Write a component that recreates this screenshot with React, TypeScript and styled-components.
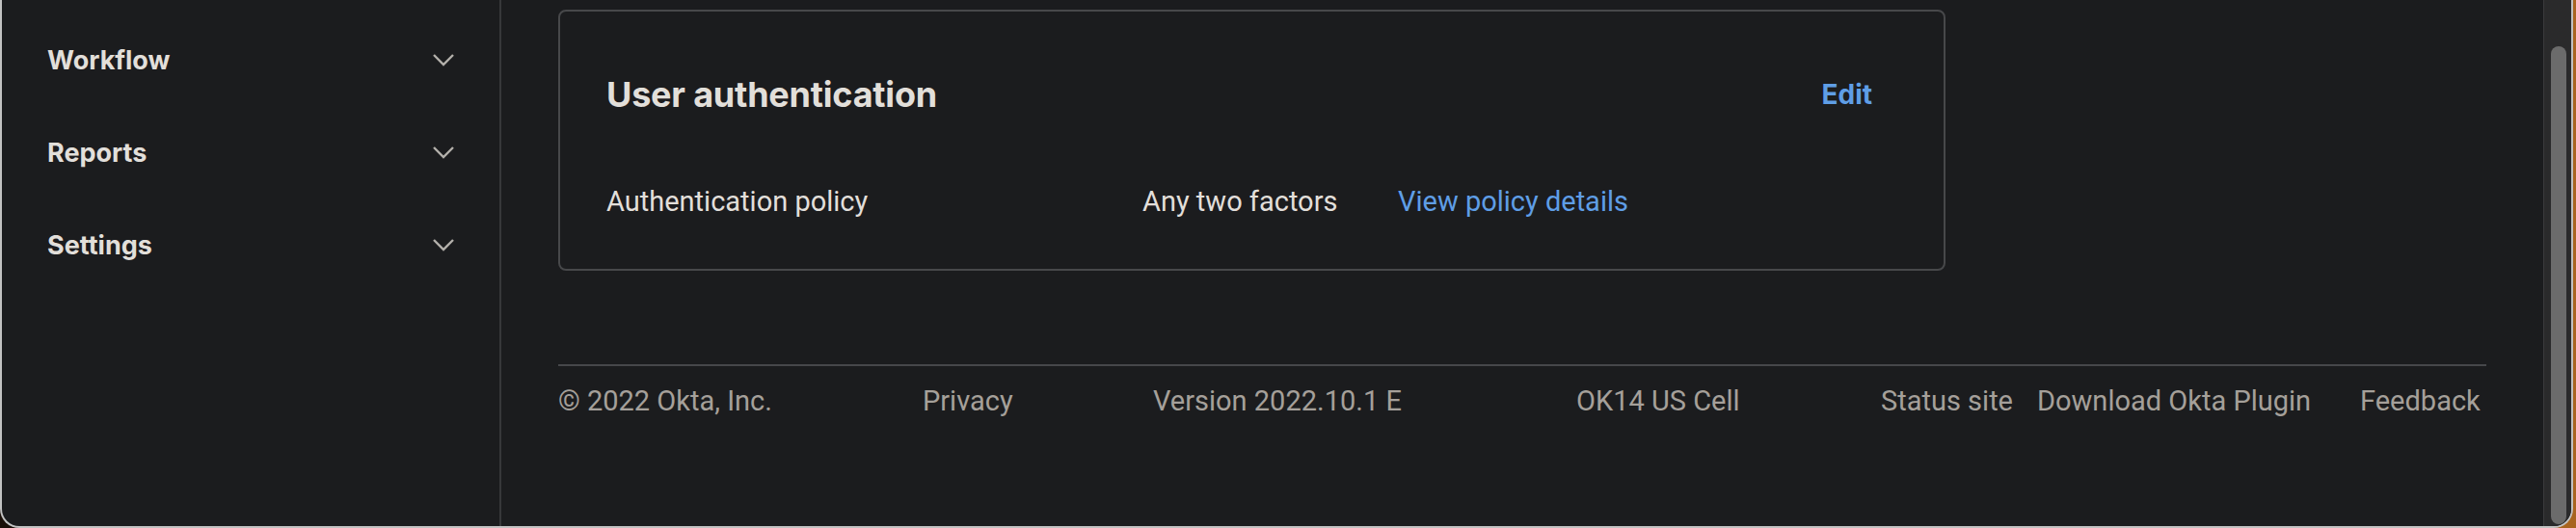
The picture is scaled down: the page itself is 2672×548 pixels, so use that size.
import React from "react";
import styled, { createGlobalStyle } from "styled-components";

const GlobalStyle = createGlobalStyle`
  html, body { margin: 0; padding: 0; }
  body {
    width: 2672px;
    height: 548px;
    overflow: hidden;
    background: linear-gradient(to right, #1a0f08 0%, #1a0f08 50%, #a8641f 50%, #a8641f 100%);
    font-family: Roboto, "Liberation Sans", sans-serif;
  }
`;

const boldFont = `Inter, Roboto, "Liberation Sans", sans-serif`;

const Window = styled.div`
  box-sizing: border-box;
  width: 2669px;
  height: 548px;
  display: flex;
  background: #1b1c1e;
  border: 2px solid #c2c2c2;
  border-top: none;
  border-radius: 0 0 20px 20px;
  overflow: hidden;
`;

const Sidebar = styled.nav`
  box-sizing: border-box;
  width: 518px;
  flex: none;
  border-right: 2px solid #37383a;
  padding-top: 14px;
  display: flex;
  flex-direction: column;
`;

const NavItem = styled.div`
  height: 96px;
  display: flex;
  align-items: center;
  justify-content: space-between;
  padding: 0 46px 0 47px;
  color: #e2dfda;
  font-family: ${boldFont};
  font-size: 27px;
  font-weight: 700;
`;

const Chevron = styled.svg`
  width: 24px;
  height: 14px;
  stroke: #b3b0ab;
  fill: none;
  stroke-width: 2.4;
`;

const Main = styled.main`
  flex: 1;
  display: flex;
  flex-direction: column;
  padding: 10px 0 0 59px;
`;

const Card = styled.section`
  box-sizing: border-box;
  width: 1439px;
  height: 271px;
  border: 2px solid #47484a;
  border-radius: 8px;
  padding: 0 74px 0 48px;
  display: flex;
  flex-direction: column;
`;

const CardHeader = styled.div`
  height: 172px;
  display: flex;
  align-items: center;
  justify-content: space-between;
`;

const Title = styled.h2`
  margin: 0;
  color: #e2dfda;
  font-family: ${boldFont};
  font-size: 36px;
  font-weight: 700;
  letter-spacing: -0.2px;
`;

const Link = styled.a<{ $bold?: boolean }>`
  color: #5f9ee6;
  font-family: ${(p) => (p.$bold ? boldFont : "inherit")};
  font-size: ${(p) => (p.$bold ? 28 : 29)}px;
  font-weight: ${(p) => (p.$bold ? 700 : 400)};
  text-decoration: none;
  cursor: pointer;
`;

const DetailRow = styled.div`
  display: flex;
  align-items: center;
  height: 50px;
  color: #e2dfda;
  font-size: 29px;
`;

const Label = styled.span`
  width: 556px;
  flex: none;
`;

const Value = styled.span`
  width: 265px;
  flex: none;
`;

const Footer = styled.footer`
  width: 2000px;
  margin-top: 97px;
  border-top: 2px solid #46474a;
  display: grid;
  grid-template-columns: 378px 239px 439px 316px 162px 335px auto;
  align-items: center;
  height: 72px;
  color: #a5a09a;
  font-size: 29px;
`;

const FooterItem = styled.span`
  white-space: nowrap;
`;

const Scrollbar = styled.div`
  box-sizing: border-box;
  width: 29px;
  flex: none;
  background: #2a2a2b;
  border-left: 1px solid #3b3b3c;
  padding: 48px 0 2px 7px;
  display: flex;
`;

const Thumb = styled.div`
  width: 16px;
  flex: none;
  background: #6b6b6b;
  border-radius: 8px;
`;

const navItems = ["Workflow", "Reports", "Settings"];

const footerItems = [
  "© 2022 Okta, Inc.",
  "Privacy",
  "Version 2022.10.1 E",
  "OK14 US Cell",
  "Status site",
  "Download Okta Plugin",
  "Feedback",
];

export default function App() {
  return (
    <>
      <GlobalStyle />
      <Window>
        <Sidebar>
          {navItems.map((n) => (
            <NavItem key={n}>
              <span>{n}</span>
              <Chevron viewBox="0 0 24 14">
                <polyline points="2,2 12,12 22,2" />
              </Chevron>
            </NavItem>
          ))}
        </Sidebar>
        <Main>
          <Card>
            <CardHeader>
              <Title>User authentication</Title>
              <Link $bold>Edit</Link>
            </CardHeader>
            <DetailRow>
              <Label>Authentication policy</Label>
              <Value>Any two factors</Value>
              <Link>View policy details</Link>
            </DetailRow>
          </Card>
          <Footer>
            {footerItems.map((f) => (
              <FooterItem key={f}>{f}</FooterItem>
            ))}
          </Footer>
        </Main>
        <Scrollbar>
          <Thumb />
        </Scrollbar>
      </Window>
    </>
  );
}
